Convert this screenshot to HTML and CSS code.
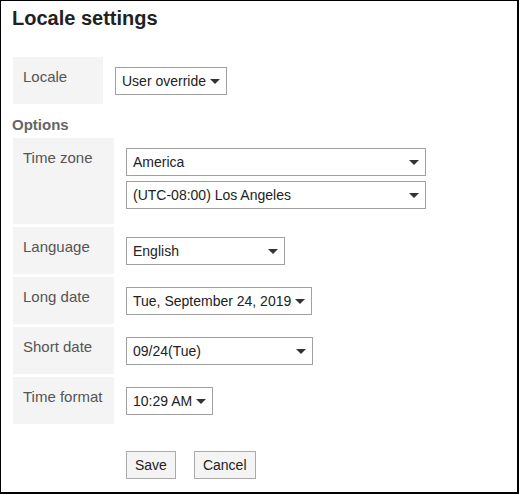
FILE: index.html
```html
<!DOCTYPE html>
<html>
<head>
<meta charset="utf-8">
<link rel="stylesheet" href="styles.css">
</head>
<body>
<div class="frame">
  <h1 class="title">Locale settings</h1>

  <div class="row row-locale">
    <div class="label label-locale">Locale</div>
    <div class="values">
      <div class="select select-auto"><span>User override</span><i class="arrow"></i></div>
    </div>
  </div>

  <div class="section">Options</div>

  <div class="options">
    <div class="row row-tz">
      <div class="label">Time zone</div>
      <div class="values">
        <div class="select select-wide"><span>America</span><i class="arrow"></i></div>
        <div class="select select-wide"><span>(UTC-08:00) Los Angeles</span><i class="arrow"></i></div>
      </div>
    </div>
    <div class="row">
      <div class="label">Language</div>
      <div class="values">
        <div class="select select-lang"><span>English</span><i class="arrow"></i></div>
      </div>
    </div>
    <div class="row">
      <div class="label">Long date</div>
      <div class="values">
        <div class="select select-auto"><span>Tue, September 24, 2019</span><i class="arrow"></i></div>
      </div>
    </div>
    <div class="row">
      <div class="label">Short date</div>
      <div class="values">
        <div class="select select-short"><span>09/24(Tue)</span><i class="arrow"></i></div>
      </div>
    </div>
    <div class="row">
      <div class="label">Time format</div>
      <div class="values">
        <div class="select select-auto"><span>10:29 AM</span><i class="arrow"></i></div>
      </div>
    </div>
  </div>

  <div class="actions">
    <button class="btn">Save</button>
    <button class="btn">Cancel</button>
  </div>
</div>
</body>
</html>
```

FILE: styles.css
```css
html, body {
  margin: 0;
  padding: 0;
  background: #fff;
}

body {
  font-family: "Liberation Sans", Arial, sans-serif;
  color: #333;
}

.frame {
  box-sizing: border-box;
  width: 519px;
  height: 494px;
  border-style: solid;
  border-color: #000;
  border-width: 1px 2px 2px 1px;
  padding: 6px 10px 0 11px;
}

.title {
  margin: 0;
  font-size: 20px;
  font-weight: bold;
  line-height: 23px;
  color: #222;
}

.row {
  display: flex;
  align-items: stretch;
  gap: 12px;
  margin-bottom: 3px;
}

.row-locale {
  margin-top: 27px;
  margin-left: 1px;
  margin-bottom: 0;
}

.label {
  box-sizing: border-box;
  width: 101px;
  flex: none;
  background: #f4f4f4;
  padding: 11px 10px;
  font-size: 15px;
  line-height: 17px;
  color: #555;
  white-space: nowrap;
}

.label-locale {
  width: 90px;
}

.values {
  display: flex;
  flex-direction: column;
  align-items: flex-start;
  gap: 5px;
  padding: 10px 0 9px;
}

.row-tz .values {
  padding-bottom: 15px;
}

.section {
  margin-top: 12px;
  font-size: 15px;
  font-weight: bold;
  line-height: 17px;
  color: #666;
}

.options {
  margin-top: 5px;
  margin-left: 1px;
}

.select {
  box-sizing: border-box;
  height: 28px;
  display: flex;
  align-items: center;
  justify-content: space-between;
  border: 1px solid #a0a0a0;
  background: #fff;
  padding: 0 6px;
  font-size: 14px;
  color: #222;
  white-space: nowrap;
}

.select-auto {
  justify-content: flex-start;
  gap: 4px;
}

.select-wide { width: 300px; }
.select-lang { width: 159px; }
.select-short { width: 187px; }

.arrow {
  display: block;
  width: 0;
  height: 0;
  border-left: 5px solid transparent;
  border-right: 5px solid transparent;
  border-top: 5px solid #333;
  margin-top: 1px;
}

.actions {
  display: flex;
  gap: 18px;
  margin-top: 27px;
  margin-left: 114px;
}

.btn {
  box-sizing: border-box;
  height: 28px;
  padding: 0 8px;
  border: 1px solid #aaa;
  background: #f4f4f4;
  font-family: "Liberation Sans", Arial, sans-serif;
  font-size: 14px;
  color: #222;
  border-radius: 0;
}
```
